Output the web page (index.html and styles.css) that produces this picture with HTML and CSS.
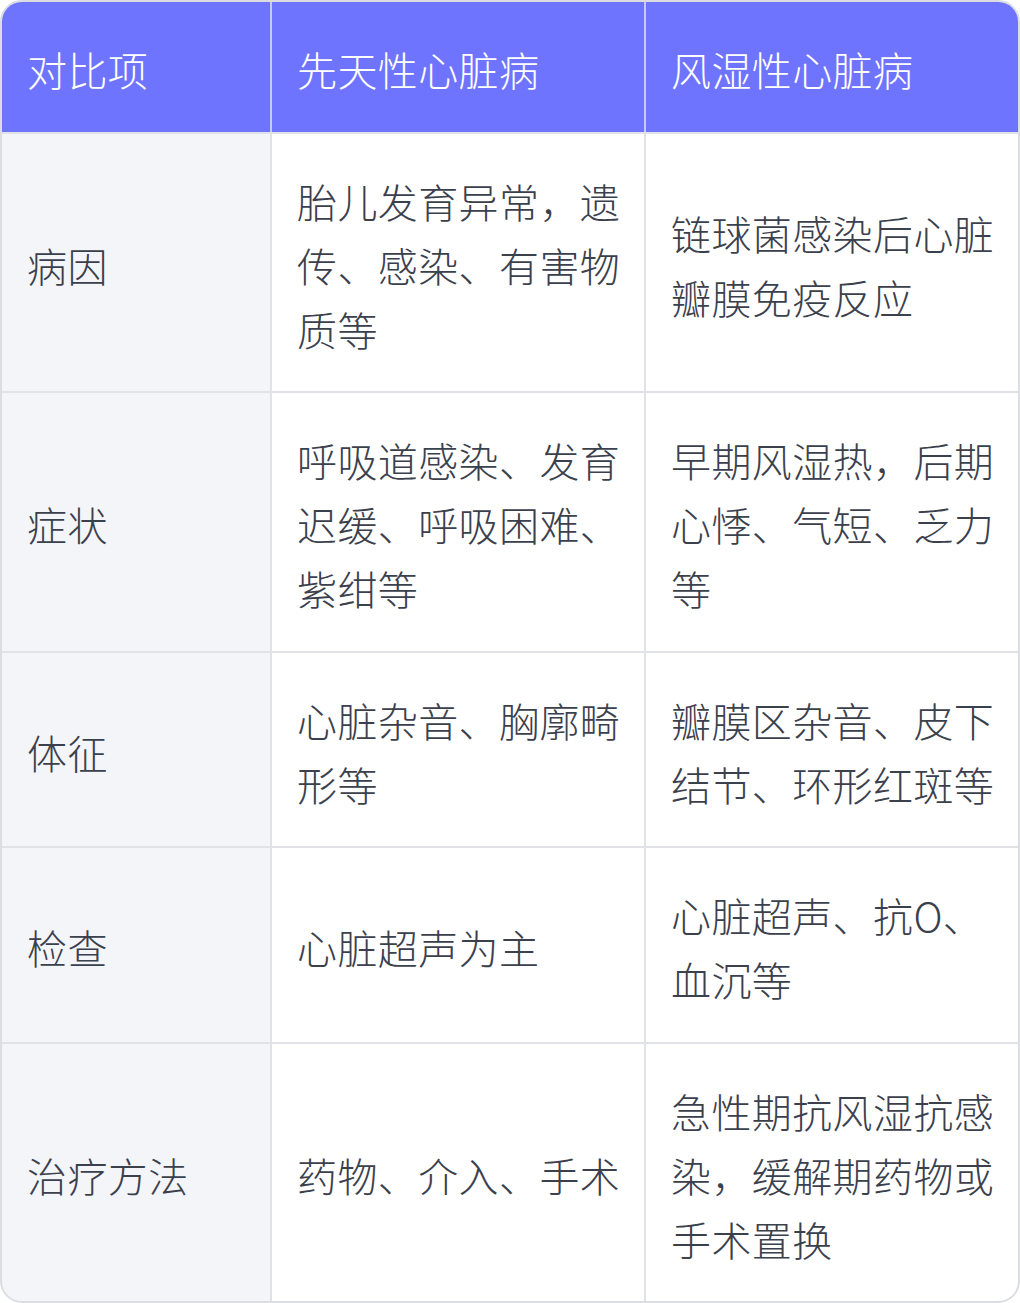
FILE: index.html
```html
<!DOCTYPE html>
<html lang="zh-CN">
<head>
<meta charset="utf-8">
<title>先天性心脏病与风湿性心脏病对比</title>
<link rel="stylesheet" href="styles.css">
</head>
<body>
<div class="table">
  <div class="row head">
    <div class="cell">对比项</div>
    <div class="cell">先天性心脏病</div>
    <div class="cell">风湿性心脏病</div>
  </div>
  <div class="row">
    <div class="cell label">病因</div>
    <div class="cell">胎儿发育异常，遗传、感染、有害物质等</div>
    <div class="cell">链球菌感染后心脏瓣膜免疫反应</div>
  </div>
  <div class="row">
    <div class="cell label">症状</div>
    <div class="cell">呼吸道感染、发育迟缓、呼吸困难、紫绀等</div>
    <div class="cell">早期风湿热，后期心悸、气短、乏力等</div>
  </div>
  <div class="row">
    <div class="cell label">体征</div>
    <div class="cell">心脏杂音、胸廓畸形等</div>
    <div class="cell">瓣膜区杂音、皮下结节、环形红斑等</div>
  </div>
  <div class="row">
    <div class="cell label">检查</div>
    <div class="cell">心脏超声为主</div>
    <div class="cell">心脏超声、抗O、血沉等</div>
  </div>
  <div class="row">
    <div class="cell label">治疗方法</div>
    <div class="cell">药物、介入、手术</div>
    <div class="cell">急性期抗风湿抗感染，缓解期药物或手术置换</div>
  </div>
</div>
</body>
</html>
```

FILE: styles.css
```css
html, body {
  margin: 0;
  padding: 0;
  background: #ffffff;
}

.table {
  width: 1020px;
  height: 1303px;
  box-sizing: border-box;
  border: 2px solid #dcdde3;
  border-radius: 22px;
  overflow: hidden;
  display: flex;
  flex-direction: column;
  gap: 2px;
  background: #e1e2e7;
  font-family: "Noto Sans CJK SC", "Noto Sans", sans-serif;
  font-weight: 300;
  font-size: 40px;
  line-height: 64px;
  letter-spacing: 0.4px;
  color: #3b404d;
}

.row {
  display: grid;
  grid-template-columns: 268px 372px 1fr;
  gap: 2px;
  flex: 1 1 auto;
}

.row.head {
  background: #c6c8f7;
}

.cell {
  background: #ffffff;
  padding: 35px 20px 30px 25px;
  display: flex;
  align-items: center;
}

.cell.label {
  background: #f4f5f9;
}

.head .cell {
  background: #6f74fe;
  color: #ffffff;
}
```
